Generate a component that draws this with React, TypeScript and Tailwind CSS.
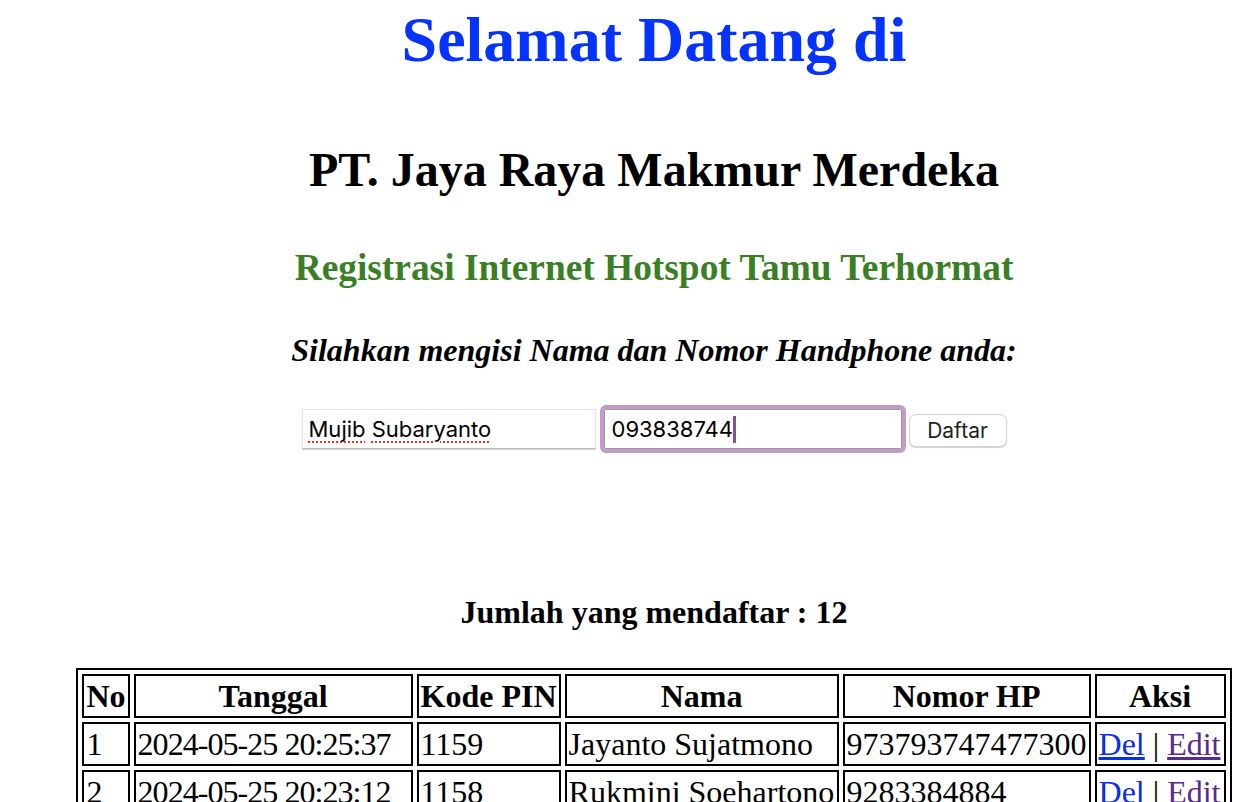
import React from 'react';

type Tamu = { no: number; tanggal: string; pin: string; nama: string; hp: string };

const DATA: Tamu[] = [
  { no: 1, tanggal: '2024-05-25 20:25:37', pin: '1159', nama: 'Jayanto Sujatmono', hp: '973793747477300' },
  { no: 2, tanggal: '2024-05-25 20:23:12', pin: '1158', nama: 'Rukmini Soehartono', hp: '9283384884' },
];

const th = 'border-2 border-black px-[2px] py-[1px] leading-[38px] text-[32px] font-bold text-center whitespace-nowrap';
const td = 'border-2 border-black px-[2px] py-[1px] leading-[38px] text-[32px] text-left whitespace-nowrap';

const App: React.FC = () => {
  return (
    <div className="h-screen overflow-hidden bg-white text-black font-['Liberation_Serif','Times_New_Roman',serif]">
      <div className="pl-[58px] text-center">
        {/* HEADINGS */}
        <h1 className="mt-[3px] text-[64px] leading-[74px] font-bold text-[#0433ff]">Selamat Datang di</h1>
        <h2 className="mt-[65px] text-[48px] leading-[55px] font-bold">PT. Jaya Raya Makmur Merdeka</h2>
        <h3 className="mt-[49px] text-[37.4px] leading-[43px] font-bold text-[#3a7f26]">Registrasi Internet Hotspot Tamu Terhormat</h3>
        <h4 className="mt-[43px] text-[32px] leading-[37px] font-bold italic">Silahkan mengisi Nama dan Nomor Handphone anda:</h4>

        {/* FORM */}
        <div className="mt-[36px] flex justify-center items-center font-['Inter','Liberation_Sans',sans-serif] text-[22px]">
          <div className="w-[294px] h-[40px] bg-white border border-[#e4e4e4] border-b-[#b9b9b9] shadow-[0_1px_1px_rgba(0,0,0,0.15)] flex items-center pl-[6px] text-left">
            <span className="underline decoration-dotted decoration-[#e0382f] decoration-[1.5px] underline-offset-[5px]">Mujib</span>
            <span>&nbsp;</span>
            <span className="underline decoration-dotted decoration-[#e0382f] decoration-[1.5px] underline-offset-[5px]">Subaryanto</span>
          </div>
          <div className="ml-[4px] w-[306px] h-[48px] rounded-[6px] border-[4px] border-[#c29bc6]">
            <div className="h-full bg-white border border-[#9a9a9a] rounded-[2px] flex items-center pl-[7px] text-left">
              <span>093838744</span>
              <span className="inline-block w-[3px] h-[27px] bg-[#8c4b9c]" />
            </div>
          </div>
          <button className="ml-[3px] mt-[3px] w-[98px] h-[33px] bg-white rounded-[7px] border border-[#d2d2d2] shadow-[0_1px_1px_rgba(0,0,0,0.18)] text-[#222] text-[21px]">
            Daftar
          </button>
        </div>

        <h4 className="mt-[141px] text-[32px] leading-[37px] font-bold">Jumlah yang mendaftar : 12</h4>

        {/* TABLE */}
        <table className="mt-[37px] mx-auto border-2 border-black border-separate border-spacing-[4px]">
          <thead>
            <tr>
              <th className={`${th} w-[47px]`}>No</th>
              <th className={`${th} w-[279px]`}>Tanggal</th>
              <th className={`${th} w-[143px]`}>Kode PIN</th>
              <th className={`${th} w-[274px]`}>Nama</th>
              <th className={`${th} w-[247px]`}>Nomor HP</th>
              <th className={`${th} w-[131px]`}>Aksi</th>
            </tr>
          </thead>
          <tbody>
            {DATA.map((r) => (
              <tr key={r.no}>
                <td className={td}>{r.no}</td>
                <td className={`${td} tracking-[-0.95px]`}>{r.tanggal}</td>
                <td className={td}>{r.pin}</td>
                <td className={td}>{r.nama}</td>
                <td className={td}>{r.hp}</td>
                <td className={td}>
                  <a href="#" className="underline text-[#0a2fe8]">Del</a> | <a href="#" className="underline text-[#562a8f]">Edit</a>
                </td>
              </tr>
            ))}
          </tbody>
        </table>
      </div>
    </div>
  );
};

export default App;
